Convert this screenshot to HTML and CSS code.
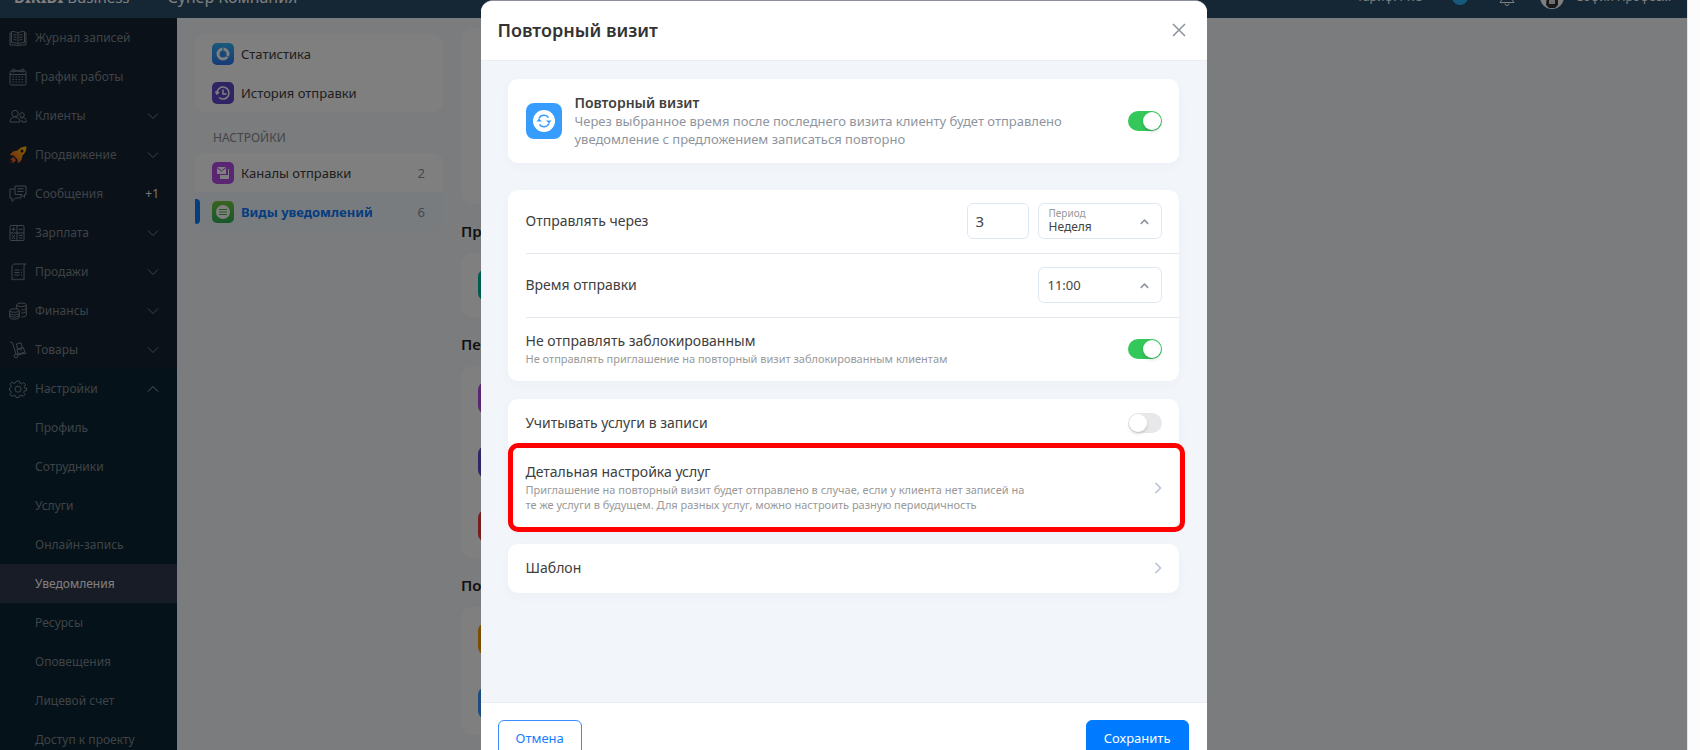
FILE: index.html
```
<!DOCTYPE html>
<html lang="ru">
	<head>
		<meta charset="utf-8">
		<title>Уведомления</title>
		<link rel="stylesheet" href="styles.css">
	</head>
	<body>
		<svg class="sprite">
			<symbol id="down" viewBox="0 0 12 8"><path d="M1 1.500l5 5 5-5"/></symbol>
			<symbol id="up" viewBox="0 0 12 8"><path d="M1 6.500l5-5 5 5"/></symbol>
			<symbol id="right" viewBox="0 0 8 12"><path d="M1.500 1l5 5-5 5"/></symbol>
		</svg>
		<div class="app">
			<header class="topbar">
				<a href="#" class="logo"><b>DIKIDI</b> Business</a>
				<span class="company">Супер Компания</span>
				<span class="tariff">Тариф: PRO</span>
				<span class="dot"></span>
				<svg class="bell" viewBox="0 0 18 20"><path d="M2 15.500h14l-2-3V8a5 5 0 0 0-10 0v4.500zM7 16.500a2 2 0 0 0 4 0"/></svg>
				<svg class="avatar" viewBox="0 0 24 24"><circle cx="12" cy="12" r="12" fill="#fff"/><path d="M7 10h11v10l-3 3H9l-3-3z" fill="#333"/><path d="M9 10h6v9H9z" fill="#ddd"/></svg>
				<span class="user">София Профес...</span>
			</header>

			<div class="page">
				<nav class="sidebar">
					<a href="#"><svg viewBox="0 0 18 18"><path d="M9 4C7 2.500 4 2.500 2.500 2.500v11C5 13.500 7.500 14 9 15c1.500-1 4-1.500 6.500-1.500v-11C14 2.500 11 2.500 9 4zM9 4v11M2.500 4H1v12h6l2 .8 2-.8h6V4h-1.500M4.500 5.500l3 .5M4.500 8l3 .5M4.500 10.500l3 .5M13.500 5.500l-3 .5M13.500 8l-3 .5M13.500 10.500l-3 .5"/></svg>Журнал записей</a>
					<a href="#"><svg viewBox="0 0 18 18"><rect x="1" y="3" width="16" height="14" rx="1.500"/><path d="M1 6.500h16M6 3h6"/><circle cx="4.500" cy="2.500" r="1.500"/><circle cx="13.500" cy="2.500" r="1.500"/><path d="M3.500 9h11M3.500 11.500h11M3.500 14h11" stroke-dasharray="1.500 1.500"/></svg>График работы</a>
					<a href="#"><svg viewBox="0 0 18 18"><circle cx="6" cy="6.500" r="3.200"/><path d="M11 15H1c0-3 1.500-4 4-5h2c2.500 1 4 2 4 5z"/><circle cx="13" cy="8" r="2.300"/><path d="M11.500 11l3-.5c2 .8 2.800 2 2.800 4.500H13v-2"/></svg>Клиенты<svg class="arrow"><use href="#down"/></svg></a>
					<a href="#"><svg viewBox="0 0 18 18"><defs><linearGradient id="fire" x1="1" y1="0" x2="0" y2="1"><stop offset="0" stop-color="#ffc800"/><stop offset="1" stop-color="#f0452c"/></linearGradient></defs><path class="rocket" fill-rule="evenodd" d="M17.500.5c-4 0-7 1.500-9 4L4 5.500.5 9l4 .5 4 4 .5 4 3.500-3.500 1-4.500c2.500-2 4-5 4-9zM13 3.500a1.500 1.500 0 1 1 0 3 1.500 1.500 0 0 1 0-3zM4 11l-3.500 3.500L4 13.500 1 17.500l3.500-2L4 17.800l3-3.800z"/></svg>Продвижение<svg class="arrow"><use href="#down"/></svg></a>
					<a href="#"><svg viewBox="0 0 18 18"><path d="M6 1h11v8.500h-1.500v3l-3-3H6zM6 4H1v9h2v3.500L6.500 13H12V9.500M8.500 3.800h6M8.500 6.500h6"/></svg>Сообщения<span class="new">+1</span></a>
					<a href="#"><svg viewBox="0 0 18 18"><rect x="1" y="1.500" width="14" height="15" rx="1"/><path d="M8 1.500v15M1 9h14M2.500 5.300h4M4.500 3.300v4M10 5.300h3.500M3 11l3 4M6 11l-3 4M10 11.500h3.500M10 14h3.500"/></svg>Зарплата<svg class="arrow"><use href="#down"/></svg></a>
					<a href="#"><svg viewBox="0 0 18 18"><path d="M17 1H6C3.500 1 3 2.500 3 4v13l1.500-1 1.500 1 1.500-1L9 17l1.500-1 1.500 1 1.500-1 1.500 1V4c0-2 .5-3 2-3M5.500 7h5M5.500 9.500h5M5.500 12h5M12 7h1M12 9.500h1M12 12h1"/></svg>Продажи<svg class="arrow"><use href="#down"/></svg></a>
					<a href="#"><svg viewBox="0 0 18 18"><ellipse cx="12.500" cy="2.800" rx="4.800" ry="1.800"/><path d="M7.700 3v4M17.300 3v10c0 1-2 2-5 2M17.300 6c0 1-2 2-5 2M17.300 9c0 1-2 2-5 2"/><ellipse cx="5.500" cy="8.500" rx="4.800" ry="1.800"/><path d="M.7 8.500v6.700c0 1 2 2 4.800 2s4.800-1 4.800-2V8.500M.7 11c0 1 2 1.800 4.800 1.800s4.800-.8 4.800-1.800M.7 13.200c0 1 2 1.800 4.800 1.800s4.800-.8 4.800-1.800"/></svg>Финансы<svg class="arrow"><use href="#down"/></svg></a>
					<a href="#"><svg viewBox="0 0 18 18"><path d="M1 1l2.500.8L7 13M8.500 14l9-2"/><circle cx="7" cy="15" r="1.800"/><path d="M8 8.500l6.500-1.800 1.200 4.500L9 13zM7.500 3l4.500-1.200 1.400 5L8.500 8zM11.500 7.500l.7 2.500"/></svg>Товары<svg class="arrow"><use href="#down"/></svg></a>
					<div class="submenu">
						<a href="#"><svg viewBox="0 0 18 18"><path d="M7.500 1h3l.5 2.300 1.500.6 2-1.300 2 2-1.300 2 .6 1.500L17.500 8v2.500l-2.200.5-.6 1.500 1.300 2-2 2-2-1.300-1.500.6-.5 1.700h-3l-.5-1.700-1.500-.6-2 1.300-2-2 1.300-2-.6-1.500-1.200-.5V8l1.200-.4.6-1.500-1.300-2 2-2 2 1.300 1.500-.6z"/><circle cx="9" cy="9.200" r="3"/></svg>Настройки<svg class="arrow open"><use href="#up"/></svg></a>
						<a href="#" class="sub">Профиль</a>
						<a href="#" class="sub">Сотрудники</a>
						<a href="#" class="sub">Услуги</a>
						<a href="#" class="sub">Онлайн-запись</a>
						<a href="#" class="sub active">Уведомления</a>
						<a href="#" class="sub">Ресурсы</a>
						<a href="#" class="sub">Оповещения</a>
						<a href="#" class="sub">Лицевой счет</a>
						<a href="#" class="sub">Доступ к проекту</a>
					</div>
				</nav>

				<aside class="settings">
					<div class="menu">
						<a href="#"><svg class="blue" viewBox="0 0 22 22"><circle cx="11" cy="11" r="5" fill="none" stroke="#fff" stroke-width="3"/><path d="M11 11V4.500M11 11l5.500 3" stroke="#2b8ff0"/></svg>Статистика</a>
						<a href="#"><svg class="violet" viewBox="0 0 22 22"><path d="M5 11a6 6 0 1 1 2 4.500M3.500 9.500L5 12l2-2M11 7.500V12h3.500" fill="none" stroke="#fff" stroke-width="1.500"/></svg>История отправки</a>
					</div>
					<div class="menu-title">НАСТРОЙКИ</div>
					<div class="menu">
						<a href="#"><svg class="purple" viewBox="0 0 22 22"><path d="M5 5h9v7H5z" fill="#fff"/><path d="M5 5.500l4.500 3.500L14 5.500" fill="none" stroke="#a94be0"/><path d="M16 7v6H8v4h9V7z" fill="#fff"/></svg>Каналы отправки<span class="num">2</span></a>
						<a href="#" class="active"><svg class="green" viewBox="0 0 22 22"><circle cx="11" cy="11" r="7" fill="#fff"/><path d="M7 8.500h8M7 11h8M7 13.500h8" stroke="#4bb34b"/></svg>Виды уведомлений<span class="num">6</span></a>
					</div>
				</aside>

				<main class="content">
					<div class="block first"></div>
					<h2>При записи</h2>
					<div class="block"><i class="teal"></i></div>
					<h2>Перед визитом</h2>
					<div class="block"><i class="purple"></i><i class="indigo"></i><i class="red"></i></div>
					<h2>После визита</h2>
					<div class="block"><i class="orange"></i><i class="sky"></i></div>
				</main>
			</div>

			<div class="overlay">
				<form class="modal">
					<div class="modal-head">
						<h1>Повторный визит</h1>
						<button type="button" class="close" aria-label="Закрыть"><svg viewBox="0 0 14 14"><path d="M1 1l12 12M13 1L1 13"/></svg></button>
					</div>
					<div class="modal-body">
						<div class="card intro">
							<svg class="repeat" viewBox="0 0 36 36">
								<rect width="36" height="36" rx="8" fill="#369dff"/>
								<circle cx="18" cy="18" r="11" fill="#fff"/>
								<path d="M13 15.500a5.500 5.500 0 0 1 9.500-1M23 20.500a5.500 5.500 0 0 1-9.500 1" fill="none" stroke="#369dff" stroke-width="1.500"/>
								<path d="M10.500 18.500l2.500-3 3 3zM25.500 17.500l-2.500 3-3-3z" fill="#369dff"/>
							</svg>
							<label for="repeat" class="text">
								<b>Повторный визит</b>
								<span>Через выбранное время после последнего визита клиенту будет отправлено уведомление с предложением записаться повторно</span>
							</label>
							<input type="checkbox" class="switch" id="repeat" checked>
						</div>

						<div class="card params">
							<div class="row">
								<label for="count">Отправлять через</label>
								<input type="text" class="field count" id="count" value="3">
								<div class="select">
									<label for="period">Период</label>
									<select class="field titled" id="period"><option>Неделя</option></select>
									<svg><use href="#up"/></svg>
								</div>
							</div>
							<div class="row">
								<label for="time">Время отправки</label>
								<div class="select">
									<select class="field" id="time"><option>11:00</option></select>
									<svg><use href="#up"/></svg>
								</div>
							</div>
							<div class="row">
								<label for="blocked">Не отправлять заблокированным
									<small>Не отправлять приглашение на повторный визит заблокированным клиентам</small>
								</label>
								<input type="checkbox" class="switch" id="blocked" checked>
							</div>
						</div>

						<div class="card">
							<div class="row low">
								<label for="services">Учитывать услуги в записи</label>
								<input type="checkbox" class="switch" id="services">
							</div>
							<a href="#" class="row detail">
								<span>Детальная настройка услуг
									<small>Приглашение на повторный визит будет отправлено в случае, если у клиента нет записей на<br>те же услуги в будущем. Для разных услуг, можно настроить разную периодичность</small>
								</span>
								<svg class="go"><use href="#right"/></svg>
							</a>
						</div>

						<div class="card">
							<a href="#" class="row low"><span>Шаблон</span><svg class="go"><use href="#right"/></svg></a>
						</div>
					</div>
					<div class="modal-foot">
						<button type="button" class="btn">Отмена</button>
						<button type="submit" class="btn save">Сохранить</button>
					</div>
				</form>
			</div>
		</div>
		<div class="scroll"></div>
	</body>
</html>
```
FILE: styles.css
```
*{
	box-sizing: border-box;
}
body{
	margin: 0;
	display: flex;
	height: 100vh;
	overflow: hidden;
	font: 13px/18px "Noto Sans", "Open Sans", sans-serif;
	color: #404040;
}
a{
	color: inherit;
	text-decoration: none;
}
.sprite{
	display: none;
}
.app{
	position: relative;
	flex: 1;
	height: 100vh;
	overflow: hidden;
	background: #f6f8fb;
}
.scroll{
	width: 13px;
	background: #fcfcfc;
	border-left: 1px solid #e4e4e4;
}

/* шапка, верх ушёл за край при прокрутке */
.topbar{
	display: flex;
	align-items: center;
	height: 42px;
	margin-top: -24px;
	padding: 0 16px 0 14px;
	background: #2a4c68;
	color: #fff;
	font-size: 12px;
}
.logo{
	font-size: 15px;
}
.company{
	margin-left: 38px;
	font-size: 16px;
}
.tariff{
	margin-left: auto;
}
.dot{
	width: 16px;
	height: 16px;
	margin: 0 30px 0 28px;
	border-radius: 50%;
	background: #2fb4ff;
}
.bell{
	width: 18px;
	height: 20px;
	fill: none;
	stroke: #fff;
}
.avatar{
	width: 24px;
	height: 24px;
	margin: 0 12px 0 24px;
}

.page{
	display: flex;
}
.sidebar{
	width: 177px;
	background: #142230;
	color: #7e868e;
	font-size: 12px;
}
.sidebar a{
	display: flex;
	align-items: center;
	gap: 8px;
	height: 39px;
	padding: 0 18px 0 9px;
}
.sidebar svg{
	width: 18px;
	height: 18px;
	fill: none;
	stroke: #7e868e;
}
.sidebar .arrow{
	width: 12px;
	height: 8px;
	margin-left: auto;
}
.sidebar .open{
	stroke: #b0b6bc;
}
.sidebar .rocket{
	fill: url(#fire);
	stroke: none;
}
.new{
	margin-left: auto;
	color: #ecece0;
}
.submenu{
	background: #0a2432;
}
.sidebar .sub{
	padding-left: 35px;
}
.sidebar .active{
	background: #2e384c;
	color: #fff;
}

.settings{
	width: 248px;
	margin: 16px 18px 0;
	font-size: 13px;
}
.menu{
	border-radius: 10px;
	background: #fff;
	overflow: hidden;
}
.menu a{
	display: flex;
	align-items: center;
	gap: 7px;
	height: 39px;
	padding: 0 18px 0 17px;
	position: relative;
}
.menu svg{
	width: 22px;
	height: 22px;
	border-radius: 5px;
}
.menu-title{
	padding: 17px 18px 6px;
	font-size: 12px;
	color: #8a8a90;
}
.menu .active{
	background: #f2f8ff;
	color: #0a7aff;
	font-weight: bold;
}
.menu .active::before{
	content: "";
	position: absolute;
	left: 0;
	width: 5px;
	height: 25px;
	border-radius: 0 4px 4px 0;
	background: #0a7aff;
}
.num{
	margin-left: auto;
	font-weight: normal;
	color: #8a9099;
}
.blue{ background: linear-gradient(#35b4f5, #2d77f0); }
.violet{ background: #6148c8; }
.green{ background: linear-gradient(#74c83c, #2fae58); }
.purple{ background: #b44de8; }
.teal{ background: #00b894; }
.indigo{ background: #5b4fd0; }
.red{ background: #ee3b3b; }
.orange{ background: #f59a00; }
.sky{ background: #369dff; }

.content{
	flex: 1;
	padding-top: 10px;
}
.content h2{
	margin: 16px 0 11px;
	font-size: 15px;
	line-height: 22px;
	font-weight: 600;
	color: #222;
}
.block{
	width: 726px;
	border-radius: 12px;
	background: #fff;
}
.first{
	height: 176px;
}
.block i{
	display: block;
	width: 32px;
	height: 32px;
	border-radius: 8px;
}
.block:not(.first){
	display: grid;
	gap: 32px;
	padding: 16px 17px;
}

.overlay{
	position: absolute;
	inset: 0;
	display: flex;
	justify-content: center;
	align-items: flex-start;
	background: rgba(0, 0, 0, .5);
	overflow: hidden;
}
.modal{
	display: flex;
	flex-direction: column;
	width: 726px;
	height: calc(100vh + 25px);
	border-top: 1px solid #8b9098;
	border-radius: 12px 12px 0 0;
	background: #f2f5fa;
	overflow: hidden;
}
.modal-head{
	display: flex;
	justify-content: space-between;
	align-items: center;
	height: 60px;
	padding: 0 21px 2px 17px;
	border-bottom: 1px solid #e8eef3;
	background: #fff;
}
.modal h1{
	margin: 0;
	font-size: 18px;
	line-height: 24px;
	font-weight: 600;
	color: #333;
}
.close{
	padding: 0;
	border: 0;
	background: none;
}
.close svg{
	display: block;
	width: 14px;
	height: 14px;
	fill: none;
	stroke: #8c939d;
	stroke-width: 1.5;
}
.modal-body{
	flex: 1;
	padding: 18px 28px 0 27px;
}
.card{
	margin-bottom: 16px;
	border-radius: 10px;
	background: #fff;
	box-shadow: 0 3px 12px rgba(60, 90, 130, .03);
}
.intro{
	display: flex;
	align-items: center;
	height: 84px;
	margin-bottom: 27px;
	padding: 0 17px 0 18px;
}
.repeat{
	width: 36px;
	height: 36px;
	margin-right: 13px;
}
.text{
	flex: 1;
	color: #8f959e;
}
.text b{
	display: block;
	font-size: 14px;
	font-weight: 600;
	color: #404040;
}
.text span{
	display: block;
	max-width: 500px;
}
.params{
	margin-bottom: 18px;
}
.row{
	display: flex;
	align-items: center;
	gap: 9px;
	height: 63px;
	margin-left: 18px;
	padding: 0 17px 1px 0;
	font-size: 14px;
}
.params .row + .row{
	height: 64px;
	border-top: 1px solid #e4e9f1;
}
.row > :first-child{
	flex: 1;
}
.row small{
	display: block;
	margin-top: 1px;
	font-size: 11px;
	line-height: 15px;
	color: #999;
}
.row.low{
	height: 49px;
}
.detail{
	position: relative;
	height: 80px;
}
.detail::after{
	content: "";
	position: absolute;
	inset: -5px -6px -4px -18px;
	border: 5px solid #f00;
	border-radius: 10px;
}
.go{
	width: 8px;
	height: 12px;
	fill: none;
	stroke: #b4c2d4;
	stroke-width: 1.5;
}
.field{
	height: 36px;
	border: 1px solid #dfe7f3;
	border-radius: 6px;
	background: #fff;
	color: #444;
	font: 13px/18px "Noto Sans", "Open Sans", sans-serif;
	appearance: none;
}
.count{
	width: 62px;
	padding: 0 8px;
	font-size: 15px;
}
.select{
	position: relative;
	width: 124px;
}
.select .field{
	display: block;
	width: 100%;
	padding: 0 9px;
}
.select .titled{
	padding: 12px 10px 0;
	font-size: 12px;
}
.select label{
	position: absolute;
	left: 11px;
	top: 3px;
	font-size: 10px;
	line-height: 14px;
	color: #999;
}
.select svg{
	position: absolute;
	right: 13px;
	top: 16px;
	width: 9px;
	height: 6px;
	fill: none;
	stroke: #8c939d;
	stroke-width: 2;
	pointer-events: none;
}
.switch{
	flex: none;
	display: flex;
	appearance: none;
	width: 34px;
	height: 20px;
	margin: 0;
	padding: 1px;
	border-radius: 10px;
	background: #e8e8ea;
}
.switch::before{
	content: "";
	width: 18px;
	border-radius: 50%;
	background: #fff;
	box-shadow: 0 2px 3px rgba(0, 0, 0, .15);
}
.switch:checked{
	justify-content: flex-end;
	background: #34c759;
}
.modal-foot{
	display: flex;
	justify-content: space-between;
	padding: 17px 18px 19px 17px;
	border-top: 1px solid #e8eef3;
	background: #fff;
}
.btn{
	height: 36px;
	padding: 0 17px;
	border: 1px solid #3d8dff;
	border-radius: 6px;
	background: #fff;
	color: #1a7dff;
	font: 13px/18px "Noto Sans", "Open Sans", sans-serif;
}
.save{
	border-color: #007aff;
	background: #007aff;
	color: #fff;
}
```
